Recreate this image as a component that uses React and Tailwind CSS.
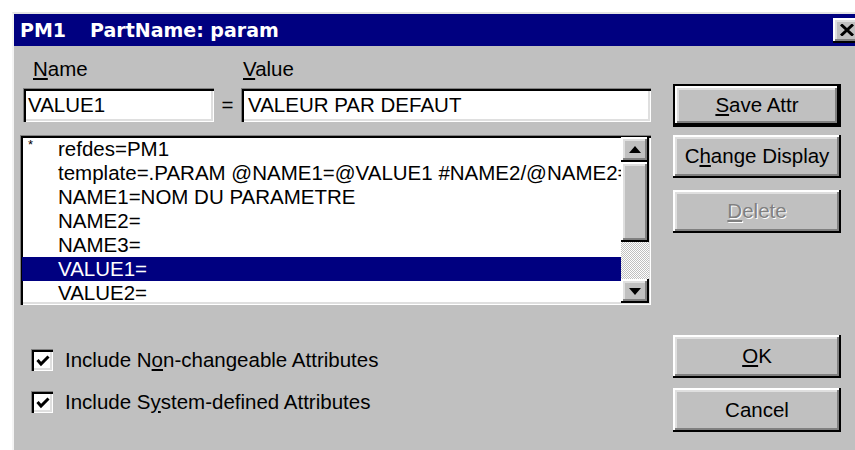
import React from "react";

const raised =
  "bg-[#c0c0c0] shadow-[inset_-2px_-2px_0_#000,inset_2px_2px_0_#fff,inset_-4px_-4px_0_#808080,inset_4px_4px_0_#dfdfdf]";
const sunken =
  "bg-white shadow-[inset_1px_1px_0_#808080,inset_3px_3px_0_#000,inset_-1px_-1px_0_#fff,inset_-3px_-3px_0_#dfdfdf]";

function Button({ children, isDefault, className = "" }) {
  return (
    <div
      className={`h-[43px] w-[168px] flex items-center justify-center ${raised} ${
        isDefault ? "border-2 border-black" : ""
      } ${className}`}
    >
      {children}
    </div>
  );
}

function ArrowUp() {
  return (
    <svg width="12" height="7" viewBox="0 0 12 7">
      <polygon points="6,0 12,7 0,7" fill="#000" />
    </svg>
  );
}

function ArrowDown() {
  return (
    <svg width="12" height="7" viewBox="0 0 12 7">
      <polygon points="0,0 12,0 6,7" fill="#000" />
    </svg>
  );
}

function CheckBox({ children }) {
  return (
    <div className="flex items-center h-[24px]">
      <div className={`w-[22px] h-[22px] flex items-center justify-center ${sunken}`}>
        <svg width="14" height="12" viewBox="0 0 14 12" className="ml-[1px] mt-[1px]">
          <polyline points="1.5,5 5,9 12.5,1.5" fill="none" stroke="#000" strokeWidth="3" />
        </svg>
      </div>
      <span className="ml-[12px]">{children}</span>
    </div>
  );
}

const rows = [
  "refdes=PM1",
  "template=.PARAM @NAME1=@VALUE1 #NAME2/@NAME2=@VALUE2",
  "NAME1=NOM DU PARAMETRE",
  "NAME2=",
  "NAME3=",
  "VALUE1=",
  "VALUE2=",
];

export default function App() {
  return (
    <div className="w-[855px] h-[450px] overflow-hidden bg-white pl-[12px] pt-[12px] font-['Liberation_Sans',Arial,sans-serif] text-[20.5px] text-black">
      <div className="w-[846px] h-[440px] bg-[#c0c0c0] border-t-2 border-l-2 border-t-[#e4e4e4] border-l-[#f4f4f4]">
        {/* caption */}
        <div className="h-[32px] bg-[#000080] flex items-center pl-[6px] text-white font-['DejaVu_Sans',sans-serif] font-bold text-[19px]">
          <span>PM1</span>
          <span className="ml-[24px]">PartName: param</span>
          <div className={`ml-auto mr-[-3px] w-[28px] h-[25px] flex items-center justify-center ${raised}`}>
            <svg width="14" height="12" viewBox="0 0 14 12">
              <path d="M1 0.5 L13 11.5 M13 0.5 L1 11.5" stroke="#000" strokeWidth="3" />
            </svg>
          </div>
        </div>

        {/* client area */}
        <div className="flex pl-[6px]">
          <div className="w-[631px] flex flex-col">
            <div className="mt-[11px] h-[24px] leading-[24px] flex pl-[13px]">
              <span className="w-[210px]">
                <u>N</u>ame
              </span>
              <span>
                <u>V</u>alue
              </span>
            </div>

            <div className="mt-[7px] h-[34px] flex items-stretch">
              <div className={`ml-[3px] w-[191px] flex items-center pl-[5px] ${sunken}`}>VALUE1</div>
              <div className="w-[27px] flex items-center justify-center">=</div>
              <div className={`w-[410px] flex items-center pl-[7px] ${sunken}`}>VALEUR PAR DEFAUT</div>
            </div>

            <div className={`mt-[13px] h-[170px] p-[2px] flex ${sunken}`}>
              <div className="w-[599px] flex flex-col overflow-hidden">
                {rows.map((r, i) => (
                  <div
                    key={i}
                    className={`h-[24px] leading-[24px] flex shrink-0 whitespace-nowrap ${
                      i === 5 ? "bg-[#000080] text-white" : ""
                    }`}
                  >
                    <div className="w-[36px] shrink-0 pl-[6px] text-[13px] leading-[16px]">
                      {i === 0 ? "*" : ""}
                    </div>
                    <span>{r}</span>
                  </div>
                ))}
              </div>
              <div className="w-[28px] flex flex-col">
                <div className={`h-[25px] flex items-center justify-center ${raised}`}>
                  <ArrowUp />
                </div>
                <div className={`h-[80px] ${raised}`} />
                <div className="h-[37px] bg-[repeating-conic-gradient(#c0c0c0_0_25%,#ffffff_0_50%)] bg-[length:2px_2px]" />
                <div className={`h-[24px] flex items-center justify-center ${raised}`}>
                  <ArrowDown />
                </div>
              </div>
            </div>

            <div className="mt-[43px] pl-[11px] flex flex-col gap-[18px]">
              <CheckBox>
                Include N<u>o</u>n-changeable Attributes
              </CheckBox>
              <CheckBox>
                Include S<u>y</u>stem-defined Attributes
              </CheckBox>
            </div>
          </div>

          <div className="ml-[22px] flex flex-col">
            <Button isDefault className="mt-[38px]">
              <span>
                <u>S</u>ave Attr
              </span>
            </Button>
            <Button className="mt-[8px]">
              <span>
                C<u>h</u>ange Display
              </span>
            </Button>
            <Button className="mt-[12px]">
              <span className="text-[#808080] [text-shadow:1px_1px_0_#fff]">
                <u>D</u>elete
              </span>
            </Button>
            <Button className="mt-[102px]">
              <span>
                <u>O</u>K
              </span>
            </Button>
            <Button className="mt-[10px] h-[44px]">
              <span>Cancel</span>
            </Button>
          </div>
        </div>
      </div>
    </div>
  );
}
